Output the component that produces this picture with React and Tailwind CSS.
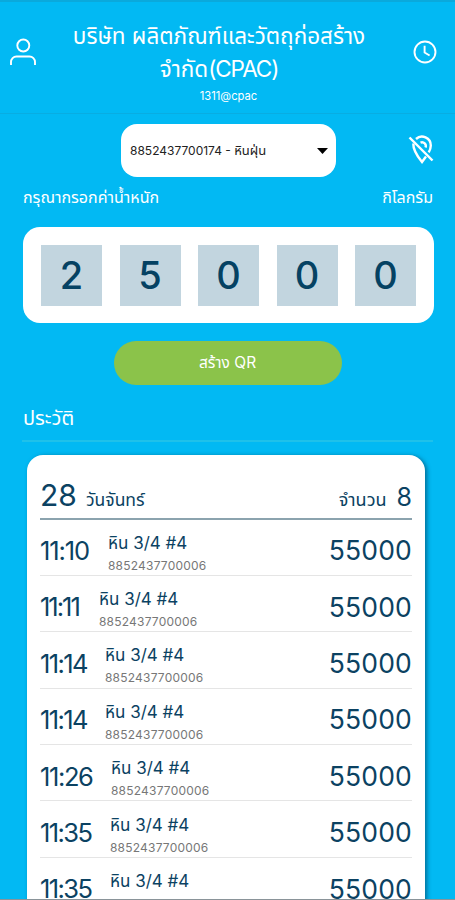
import { useState } from 'react';

const HISTORY = [
  { id: 1, time: '11:10', timeClass: 'w-[67px] tracking-[-1.100px]' },
  { id: 2, time: '11:11', timeClass: 'w-[58px] tracking-[-2px]' },
  { id: 3, time: '11:14', timeClass: 'w-[64px] tracking-[-1.600px]' },
  { id: 4, time: '11:14', timeClass: 'w-[64px] tracking-[-1.600px]' },
  { id: 5, time: '11:26', timeClass: 'w-[70px] tracking-[-1.400px]' },
  { id: 6, time: '11:35', timeClass: 'w-[69px] tracking-[-1.600px]' },
  { id: 7, time: '11:35', timeClass: 'w-[69px] tracking-[-1.600px]' },
];

function UserIcon() {
  return (
    <svg width="28" height="28" viewBox="0 0 28 28" fill="none" stroke="currentColor" strokeWidth="1.9">
      <circle cx="14.300" cy="7.500" r="6" />
      <path d="M2 27v-3a5.500 5.500 0 0 1 5.500-5.500h13A5.500 5.500 0 0 1 26 24v3" />
    </svg>
  );
}

function ClockIcon() {
  return (
    <svg width="24" height="24" viewBox="0 0 24 24" fill="none" stroke="currentColor" strokeWidth="1.9">
      <circle cx="12" cy="12" r="10.500" />
      <path d="M11.600 5.800v6.700l5 3" />
    </svg>
  );
}

function PinOffIcon() {
  return (
    <svg width="26" height="30" viewBox="0 0 26 30" fill="none" stroke="currentColor" strokeWidth="2.400">
      <path d="M8 4A8.800 8.800 0 0 1 22.800 10.500c0 2.500-.8 4.600-2.100 6.800" />
      <path d="M12.500 7.600a3.800 3.800 0 0 1 5 5" />
      <path d="M5.300 8.500C5 15 9.500 21.500 14 27l4-5.500" />
      <path d="M1.500 2.500 24.500 25.500" />
    </svg>
  );
}

export default function App() {
  const [digits] = useState(['2', '5', '0', '0', '0']);

  return (
    <div className="flex h-[900px] w-[455px] flex-col overflow-hidden border-b border-t-2 border-b-[#8a9499] border-t-[#0aa9dc] bg-[#02b9f3] font-['Inter','Noto_Sans_Thai','Noto_Sans',sans-serif] text-white">
      {/* Header */}
      <header className="flex h-[112px] shrink-0 items-start justify-between border-b border-[#08ade2] pl-[9px] pr-[18px]">
        <div className="mt-[36px]"><UserIcon /></div>
        <div className="flex flex-col items-center">
          <h1 className="mr-[12px] mt-[17px] whitespace-nowrap text-center text-[22.500px] leading-[33px]">
            บริษัท ผลิตภัณฑ์และวัตถุก่อสร้าง<br />จำกัด<span className="tracking-[-1.100px]">(CPAC)</span>
          </h1>
          <p className="ml-[7px] mt-[2px] text-[11.200px] leading-[18px]">1311@cpac</p>
        </div>
        <div className="mt-[38px]"><ClockIcon /></div>
      </header>

      {/* Product select */}
      <div className="flex h-[64px] shrink-0 items-start justify-end pr-[21px] pt-[10px]">
        <button className="flex h-[53px] w-[215px] items-center justify-between rounded-[16px] bg-white pl-[9px] pr-[8px] text-[12px] text-[#222]">
          <span className="whitespace-nowrap">8852437700174 - <span className="text-[13px]">หินฝุ่น</span></span>
          <svg width="11" height="6" viewBox="0 0 11 6" fill="#000"><path d="M0 0h11L5.500 6z" /></svg>
        </button>
        <div className="ml-[72px] mt-[11px]"><PinOffIcon /></div>
      </div>

      <div className="flex h-[49px] shrink-0 justify-between pl-[23px] pr-[22px] pt-[9px] text-[16px] leading-[20px]">
        <span>กรุณากรอกค่าน้ำหนัก</span>
        <span>กิโลกรัม</span>
      </div>

      {/* Weight digits */}
      <div className="ml-[23px] mr-[21px] flex h-[96px] shrink-0 items-center justify-between rounded-[17px] bg-white px-[18px]">
        {digits.map((d, i) => (
          <div key={i} className="flex h-[61px] w-[61px] items-center justify-center bg-[#c2d5df] text-[38px] font-[450] text-[#054263]">
            {d}
          </div>
        ))}
      </div>

      <button className="mx-auto mt-[18px] h-[44px] w-[228px] shrink-0 rounded-full bg-[#8bc34a] text-[15.500px]">
        สร้าง QR
      </button>

      {/* History */}
      <h2 className="mx-[22px] mt-[19px] h-[38px] shrink-0 border-b-2 border-[#1fc1ea] pl-px text-[20px] leading-[28px]">ประวัติ</h2>

      <section className="ml-[27px] mr-[30px] mt-[13px] h-[500px] shrink-0 rounded-t-[16px] bg-white px-[13px] text-[#0b4262] shadow-[2px_1px_4px_rgba(0,60,90,0.6)]">
        <div className="flex h-[64.500px] items-end justify-between border-b-2 border-[#8ba3ae] pb-[8px] leading-none">
          <div className="flex items-baseline">
            <span className="w-[46px] text-[30px]">28</span>
            <span className="text-[17.500px]">วันจันทร์</span>
          </div>
          <div className="flex items-baseline">
            <span className="text-[18px]">จำนวน</span>
            <span className="ml-[10px] text-[25px]">8</span>
          </div>
        </div>
        {HISTORY.map(row => (
          <div key={row.id} className="flex h-[56.400px] items-center border-b border-[#e5e5e5] pt-[8px]">
            <span className={`shrink-0 whitespace-nowrap text-[25.500px] ${row.timeClass}`}>{row.time}</span>
            <div className="ml-px flex flex-col pt-[4px]">
              <span className="text-[17px] leading-[24px]">หิน 3/4 #4</span>
              <span className="text-[12px] leading-[21px] tracking-[0.200px] text-[#777]">8852437700006</span>
            </div>
            <span className="ml-auto text-[26.500px] tracking-[0.200px]">55000</span>
          </div>
        ))}
      </section>
    </div>
  );
}
